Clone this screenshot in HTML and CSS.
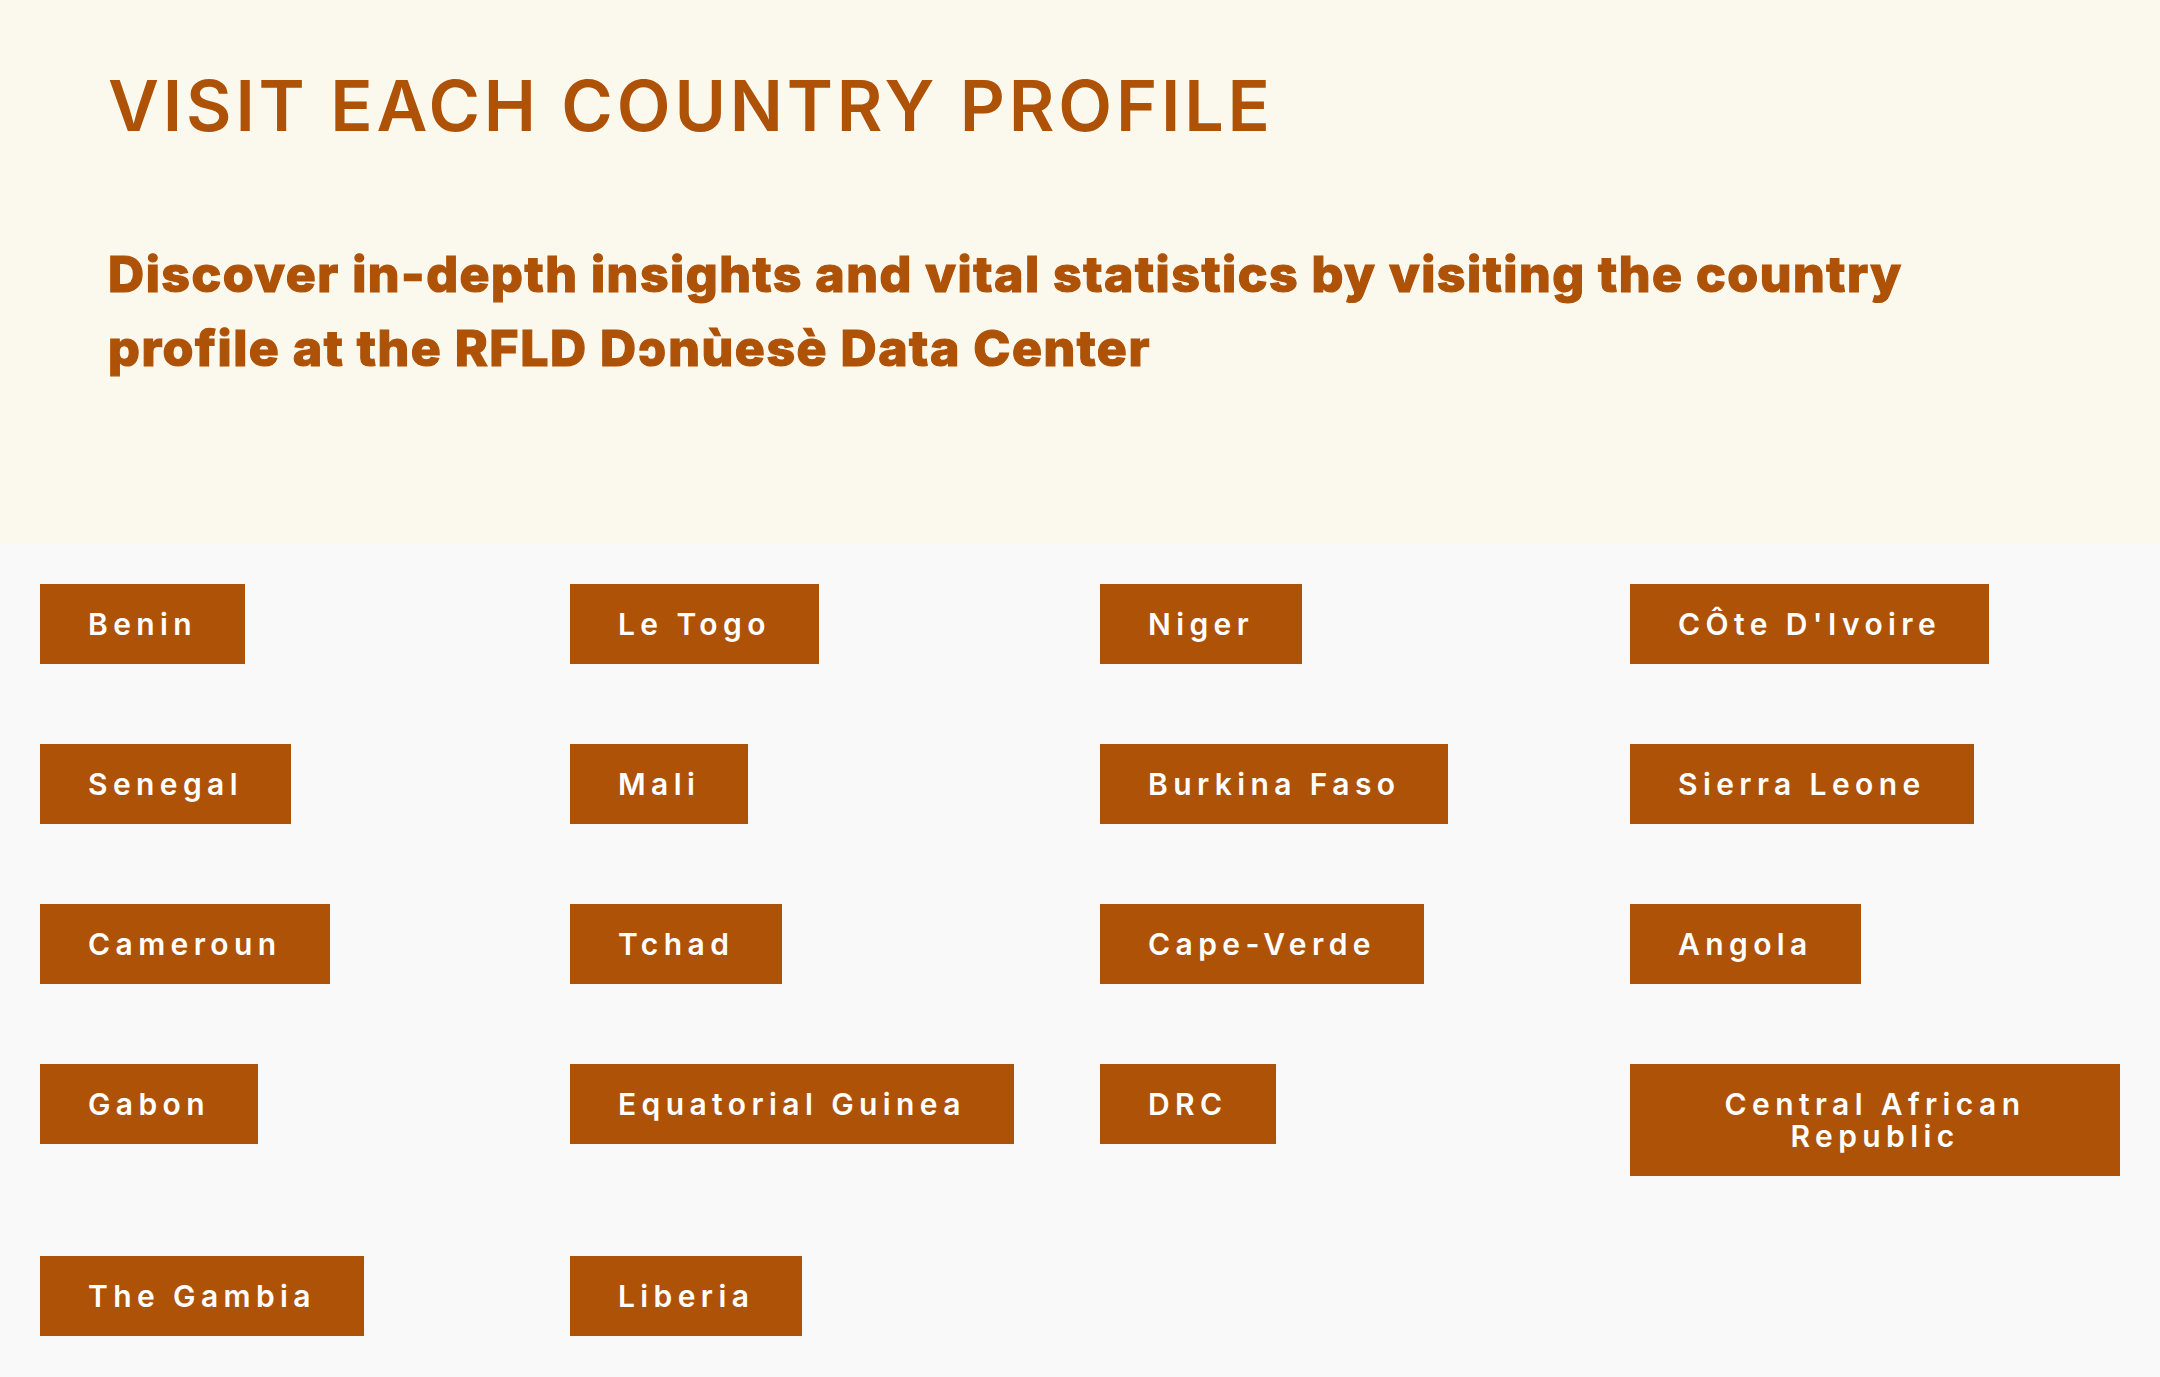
FILE: index.html
```html
<!DOCTYPE html>
<html lang="en">
<head>
<meta charset="utf-8">
<title>Visit each country profile</title>
<link rel="stylesheet" href="styles.css">
</head>
<body>
  <header class="intro">
    <h1 class="intro-title">VISIT EACH COUNTRY PROFILE</h1>
    <p class="intro-lead">Discover in-depth insights and vital statistics by visiting the country profile at the RFLD Dɔnùesè Data Center</p>
  </header>
  <main class="countries">
    <a class="country" href="#">Benin</a>
    <a class="country" href="#">Le Togo</a>
    <a class="country" href="#">Niger</a>
    <a class="country" href="#">CÔte D'Ivoire</a>
    <a class="country" href="#">Senegal</a>
    <a class="country" href="#">Mali</a>
    <a class="country" href="#">Burkina Faso</a>
    <a class="country" href="#">Sierra Leone</a>
    <a class="country" href="#">Cameroun</a>
    <a class="country" href="#">Tchad</a>
    <a class="country" href="#">Cape-Verde</a>
    <a class="country" href="#">Angola</a>
    <a class="country" href="#">Gabon</a>
    <a class="country" href="#">Equatorial Guinea</a>
    <a class="country" href="#">DRC</a>
    <a class="country" href="#">Central African Republic</a>
    <a class="country" href="#">The Gambia</a>
    <a class="country" href="#">Liberia</a>
  </main>
</body>
</html>
```
FILE: styles.css
```css
html, body {
  margin: 0;
  padding: 0;
}

body {
  background: #f9f9f9;
  font-family: Inter, "Noto Sans", sans-serif;
}

.intro {
  background: #fbf8ee;
  height: 544px;
  box-sizing: border-box;
  padding: 64px 108px 0;
}

.intro-title {
  margin: 0;
  color: #ae5207;
  font-family: Inter, sans-serif;
  font-weight: 600;
  font-size: 70px;
  line-height: 84px;
  letter-spacing: 0.055em;
}

.intro-lead {
  margin: 89px 0 0;
  max-width: 1860px;
  color: #ae5207;
  font-family: Inter, sans-serif;
  font-weight: 800;
  font-size: 50px;
  line-height: 74px;
  letter-spacing: 0.03em;
  -webkit-text-stroke: 1.2px #ae5207;
}

.countries {
  display: grid;
  grid-template-columns: repeat(4, 490px);
  column-gap: 40px;
  row-gap: 80px;
  padding: 40px;
  align-items: start;
  justify-items: start;
}

.country {
  display: block;
  box-sizing: border-box;
  max-width: 100%;
  padding: 24px 48px;
  background: #ae5207;
  color: #ffffff;
  text-decoration: none;
  text-align: center;
  font-family: Inter, sans-serif;
  font-weight: 600;
  font-size: 30px;
  line-height: 32px;
  letter-spacing: 0.18em;
}
```
